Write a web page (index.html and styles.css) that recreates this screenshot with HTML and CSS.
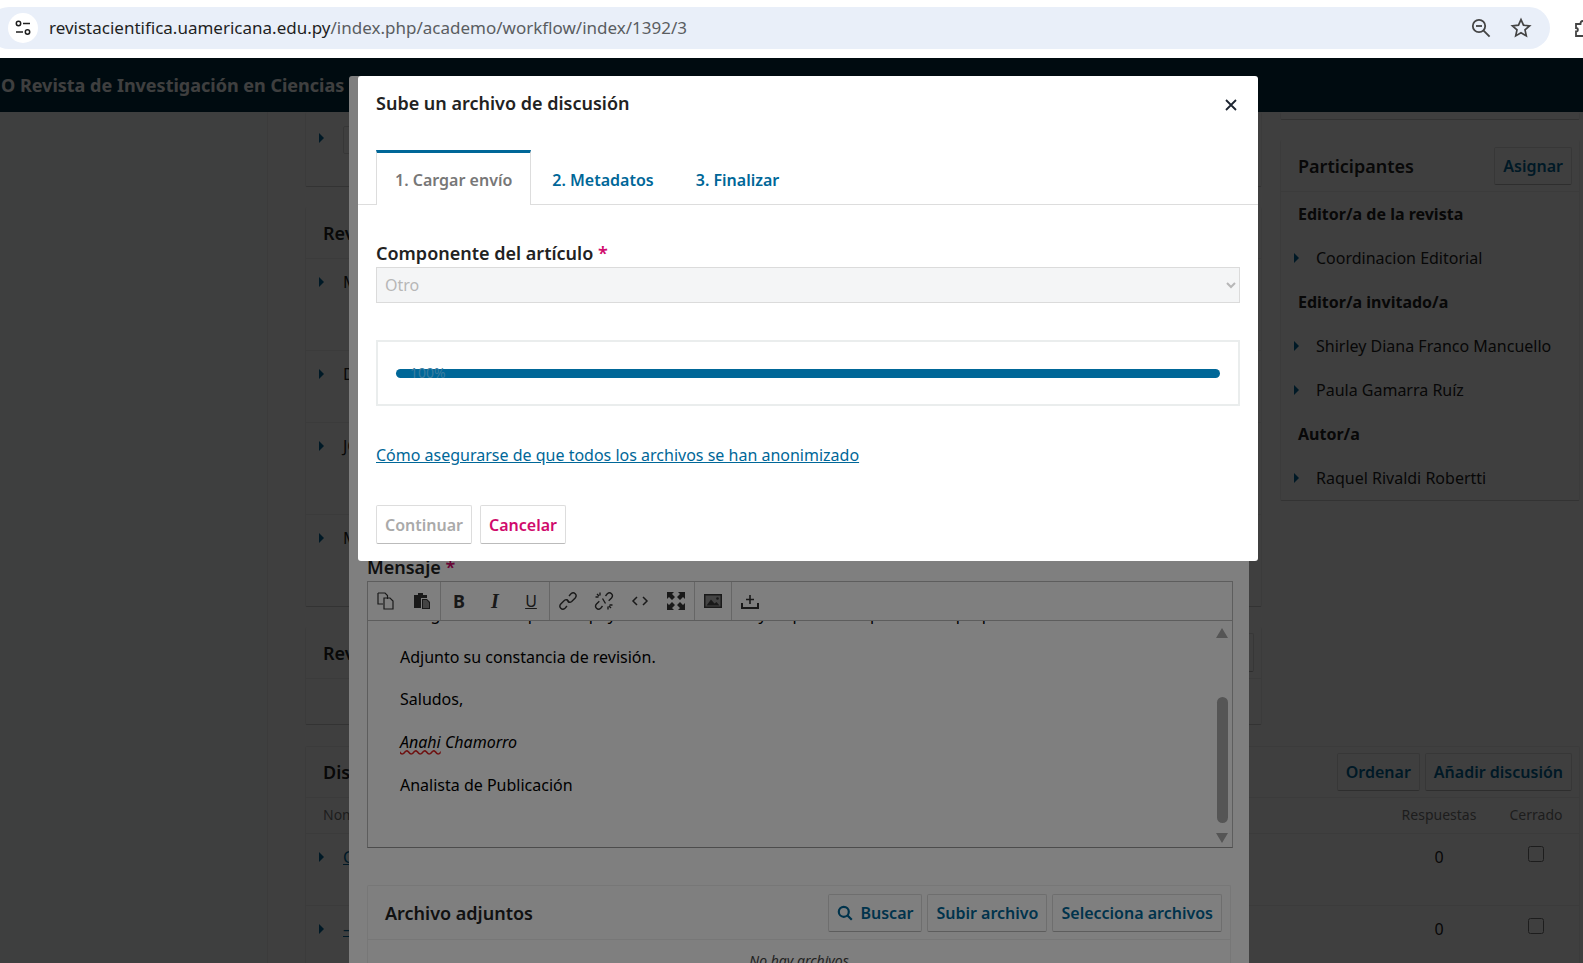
FILE: index.html
```html
<!DOCTYPE html>
<html lang="es">

<head>
  <meta charset="UTF-8" />
  <meta name="viewport" content="width=device-width, initial-scale=1.0" />
  <title>Sube un archivo de discusión</title>
  <link rel="stylesheet" href="styles.css">
</head>

<body>
  <div class="browser-bar">
    <div class="url-pill">
      <span class="site-info">
        <svg width="18" height="18" viewBox="0 0 18 18" fill="none" stroke="#1f1f1f" stroke-width="1.5">
          <circle cx="4.5" cy="4.5" r="2.2" />
          <path d="M9 4.5h7" />
          <path d="M2 13h7" />
          <circle cx="13.5" cy="13" r="2.2" />
        </svg>
      </span>
      <span class="url-text"><b>revistacientifica.uamericana.edu.py</b>/index.php/academo/workflow/index/1392/3</span>
      <span class="url-icons">
        <svg width="22" height="22" viewBox="0 0 22 22" fill="none" stroke="#444" stroke-width="1.8">
          <circle cx="9" cy="9" r="6.2" />
          <path d="M13.6 13.6l6 6" />
          <path d="M6 9h6" />
        </svg>
        <svg width="22" height="22" viewBox="0 0 22 22" fill="none" stroke="#444" stroke-width="1.7">
          <path d="M11 2.6l2.5 5.6 6.1.6-4.6 4.1 1.3 6-5.3-3.1-5.3 3.1 1.3-6-4.6-4.1 6.1-.6z" />
        </svg>
      </span>
    </div>
    <svg class="puzzle" width="22" height="22" viewBox="0 0 22 22" fill="none" stroke="#444" stroke-width="1.8">
      <path d="M3 19v-4.5c2.5 0 2.5-3.5 0-3.5V7h4.5c0-4 4.5-4 4.5 0H16v4c4 0 4 4.500 0 4.500V19z" />
    </svg>
  </div>

  <div class="app">
    <header class="app-nav">O Revista de Investigación en Ciencias Sociales</header>

    <div class="app-body">
      <aside class="side-nav"></aside>

      <main class="workflow">
        <div class="stack">
          <section class="card card-first">
            <div class="row"><i class="tri"></i><span class="file-box"></span></div>
          </section>

          <section class="card">
            <div class="card-head"><h2>Revisores</h2></div>
            <div class="row row-tall"><i class="tri"></i><span>M</span></div>
            <div class="row row-short"><i class="tri"></i><span>D</span></div>
            <div class="row row-tall"><i class="tri"></i><span>JO</span></div>
            <div class="row row-last"><i class="tri"></i><span>M</span></div>
          </section>

          <section class="card">
            <div class="card-head"><h2>Revisión</h2><span class="btn btn-ghost"></span></div>
            <div class="card-empty"></div>
          </section>
        </div>

        <div class="stack">
          <section class="card card-sliver"></section>

          <section class="card">
            <div class="card-head"><h2>Participantes</h2><span class="btn">Asignar</span></div>
            <h3 class="role">Editor/a de la revista</h3>
            <div class="person"><i class="tri"></i>Coordinacion Editorial</div>
            <h3 class="role">Editor/a invitado/a</h3>
            <div class="person"><i class="tri"></i>Shirley Diana Franco Mancuello</div>
            <div class="person"><i class="tri"></i>Paula Gamarra Ruíz</div>
            <h3 class="role">Autor/a</h3>
            <div class="person"><i class="tri"></i>Raquel Rivaldi Robertti</div>
          </section>
        </div>

        <section class="card discussions">
          <div class="card-head">
            <h2>Discusión</h2>
            <div class="btn-group">
              <span class="btn">Ordenar</span>
              <span class="btn">Añadir discusión</span>
            </div>
          </div>
          <div class="disc-row disc-header">
            <span class="disc-name">Nombre</span>
            <span>Última respuesta</span>
            <span class="center">Respuestas</span>
            <span class="center">Cerrado</span>
          </div>
          <div class="disc-row">
            <span class="disc-name"><i class="tri"></i><a>C</a></span>
            <span></span>
            <span class="center">0</span>
            <span class="center"><input type="checkbox" class="check" /></span>
          </div>
          <div class="disc-row">
            <span class="disc-name"><i class="tri"></i><a>–</a></span>
            <span></span>
            <span class="center">0</span>
            <span class="center"><input type="checkbox" class="check" /></span>
          </div>
        </section>
      </main>
    </div>

    <div class="backdrop"></div>

    <div class="modal modal-back">
      <div class="field-label">Mensaje <em>*</em></div>
      <div class="editor">
        <div class="toolbar">
          <div class="tool-group">
            <span class="tool">
              <svg width="20" height="20" viewBox="0 0 20 20" fill="none" stroke="#333" stroke-width="1.2">
                <path d="M2 2h7l2.500 2.500V8M2 2v11h5" />
                <path d="M8 7h6l3 3v8H8z" />
              </svg>
            </span>
            <span class="tool">
              <svg width="20" height="20" viewBox="0 0 20 20">
                <path d="M2 4h4V2h5v2h4v3H9v10H2z" fill="#333" />
                <path d="M10 8h5l3 3v7h-8z" fill="#333" />
                <path d="M11 9h3.500l2.500 2.500V17h-6z" fill="#888" />
              </svg>
            </span>
          </div>
          <div class="tool-group">
            <span class="tool tool-b">B</span>
            <span class="tool tool-i">I</span>
            <span class="tool tool-u">U</span>
          </div>
          <div class="tool-group">
            <span class="tool">
              <svg width="20" height="20" viewBox="0 0 20 20" fill="none" stroke="#333" stroke-width="1.400">
                <path d="M8.500 8.500l3 3" />
                <path d="M11 5l2-2.200c1.500-1.300 3.200-1 4.200 0s1.300 2.700 0 4.200l-3.500 3.500c-1.500 1.300-3 1-4-.2" />
                <path d="M9 15l-2 2.200c-1.500 1.300-3.200 1-4.200 0s-1.300-2.700 0-4.200l3.500-3.500c1.500-1.300 3-1 4 .2" />
              </svg>
            </span>
            <span class="tool">
              <svg width="20" height="20" viewBox="0 0 20 20" fill="none" stroke="#333" stroke-width="1.400">
                <path d="M11.500 5l1.800-2.200c1.500-1.300 3.200-1 4.200 0s1.300 2.700 0 4.200l-2.800 2.800" />
                <path d="M8.500 15l-1.800 2.200c-1.500 1.300-3.200 1-4.200 0s-1.300-2.700 0-4.200l2.800-2.800" />
                <path d="M6 1.500v3M1.500 6h3M3 3l2 2M14 18.500v-3M18.500 14h-3M17 17l-2-2M8.500 7.500l3 5" />
              </svg>
            </span>
            <span class="tool">
              <svg width="20" height="20" viewBox="0 0 20 20" fill="none" stroke="#333" stroke-width="1.500">
                <path d="M7 6l-4 4 4 4M13 6l4 4-4 4" />
              </svg>
            </span>
            <span class="tool">
              <svg width="20" height="20" viewBox="0 0 20 20" fill="#333">
                <path d="M1 1h7L6 3l3 3-3 3-3-3-2 2zM19 1v7l-2-2-3 3-3-3 3-3-2-2zM1 19v-7l2 2 3-3 3 3-3 3 2 2zM19 19h-7l2-2-3-3 3-3 3 3 2-2z" />
              </svg>
            </span>
          </div>
          <div class="tool-group">
            <span class="tool">
              <svg width="20" height="20" viewBox="0 0 20 20">
                <path d="M1 3h18v14H1z" fill="#333" />
                <path d="M2.500 4.500h15v11h-15z" fill="#888" />
                <path d="M3.500 14.500l4.500-6 3.500 4 2-1.500 3 3.500z" fill="#333" />
                <circle cx="14.500" cy="7.500" r="1.300" fill="#333" />
              </svg>
            </span>
          </div>
          <div class="tool-group tool-group-last">
            <span class="tool">
              <svg width="20" height="20" viewBox="0 0 20 20" fill="none" stroke="#333" stroke-width="2">
                <path d="M2 12v5h16v-5" />
                <path d="M10 4v9M6 8.500h8" stroke-width="1.600" />
              </svg>
            </span>
          </div>
        </div>
        <div class="editor-body">
          <p class="clipped">Le agradecemos por su apoyo a nuestra revista y su pronta respuesta a la propuesta.</p>
          <p>Adjunto su constancia de revisión.</p>
          <p>Saludos,</p>
          <p><i><span class="misspelled">Anahi</span> Chamorro</i></p>
          <p>Analista de Publicación</p>
          <div class="scroll-rail">
            <i class="scroll-up"></i>
            <i class="scroll-thumb"></i>
            <i class="scroll-down"></i>
          </div>
        </div>
      </div>

      <section class="attachments">
        <div class="attach-head">
          <h2>Archivo adjuntos</h2>
          <div class="btn-group">
            <span class="btn">
              <svg width="16" height="16" viewBox="0 0 16 16" fill="none" stroke="#006798" stroke-width="2.200">
                <circle cx="6.800" cy="6.800" r="5" />
                <path d="M10.500 10.500l4.300 4.300" />
              </svg>
              Buscar
            </span>
            <span class="btn">Subir archivo</span>
            <span class="btn">Selecciona archivos</span>
          </div>
        </div>
        <div class="attach-empty">No hay archivos</div>
      </section>
    </div>

    <div class="backdrop"></div>

    <div class="modal modal-front">
      <div class="modal-head">
        <h1>Sube un archivo de discusión</h1>
        <svg class="close" width="12" height="12" viewBox="0 0 12 12" fill="none" stroke="#1c2430" stroke-width="1.800">
          <path d="M1 1l10 10M11 1L1 11" />
        </svg>
      </div>

      <div class="tabs">
        <span class="tab active">1. Cargar envío</span>
        <span class="tab">2. Metadatos</span>
        <span class="tab">3. Finalizar</span>
      </div>

      <div class="modal-body">
        <div class="field-label">Componente del artículo <em>*</em></div>
        <select class="select" disabled>
          <option>Otro</option>
        </select>

        <div class="upload-box">
          <div class="progress"><span class="progress-text">100%</span></div>
        </div>

        <a class="help-link">Cómo asegurarse de que todos los archivos se han anonimizado</a>

        <div class="btn-group actions">
          <span class="btn btn-disabled">Continuar</span>
          <span class="btn btn-cancel">Cancelar</span>
        </div>
      </div>
    </div>
  </div>
</body>

</html>
```

FILE: styles.css
```css
* {
  padding: 0;
  margin: 0;
  box-sizing: border-box;
}

html,
body {
  height: 100%;
  overflow: hidden;
}

body {
  display: flex;
  flex-direction: column;
  font-family: "Noto Sans", sans-serif;
  font-size: 16px;
  line-height: 24px;
  color: #222;
  background-color: #fff;
}

/* browser chrome */
.browser-bar {
  flex: none;
  display: flex;
  align-items: center;
  height: 58px;
  padding-bottom: 2px;
  overflow: hidden;
  background-color: #fff;
}

.url-pill {
  flex: none;
  display: flex;
  align-items: center;
  width: 1562px;
  height: 42px;
  margin-left: -12px;
  padding: 0 18px 0 20px;
  border-radius: 21px;
  background-color: #e9eff9;
}

.site-info {
  display: flex;
  align-items: center;
  justify-content: center;
  width: 30px;
  height: 30px;
  border-radius: 50%;
  background-color: #fff;
}

.url-text {
  margin-left: 11px;
  font-size: 17px;
  color: #5a5d61;
}

.url-text b {
  font-weight: 400;
  color: #1f1f1f;
}

.url-icons {
  display: flex;
  gap: 18px;
  margin-left: auto;
}

.puzzle {
  flex: none;
  margin-left: 23px;
}

/* page behind the dialogs */
.app {
  position: relative;
  flex: 1;
  overflow: hidden;
}

.app-nav {
  height: 54px;
  padding-left: 1px;
  font-size: 18px;
  font-weight: 700;
  line-height: 54px;
  white-space: nowrap;
  color: #fff;
  background-color: #002c42;
}

.app-body {
  display: flex;
  height: 851px;
  overflow: hidden;
}

.side-nav {
  flex: none;
  width: 268px;
  border-right: 1px solid #eee;
  background-color: #f9fdfc;
}

.workflow {
  flex: 1;
  display: grid;
  grid-template-columns: 957px 300px;
  grid-template-rows: 613px auto;
  gap: 21px 18px;
  padding-left: 37px;
  background-color: #fff;
}

.stack {
  display: flex;
  flex-direction: column;
  gap: 20px;
}

.card {
  border: 1px solid #eee;
  border-top: 0;
  border-bottom-color: #ccc;
  border-radius: 2px;
  background-color: #fff;
}

.card-first {
  height: 75px;
  padding-top: 14px;
}

.card-sliver {
  height: 8px;
}

.card-head {
  display: flex;
  align-items: center;
  justify-content: space-between;
  height: 52px;
  padding: 0 7px 0 17px;
  border-bottom: 1px solid #eee;
}

.card-head h2,
.attach-head h2 {
  font-size: 18px;
  font-weight: 600;
}

.card-empty {
  height: 45px;
}

.row {
  display: flex;
  align-items: flex-start;
  padding: 11px 0 0 13px;
  border-bottom: 1px solid #eee;
}

.row:last-child {
  border-bottom: 0;
}

.card-first .row {
  padding-top: 0;
}

.row-tall {
  height: 92px;
}

.row-short {
  height: 72px;
}

.row-last {
  height: 91px;
}

.tri {
  flex: none;
  display: inline-block;
  width: 0;
  height: 0;
  margin: 7px 19px 0 0;
  border-top: 5px solid transparent;
  border-bottom: 5px solid transparent;
  border-left: 5px solid #006798;
}

.file-box {
  width: 300px;
  height: 28px;
  border: 1px solid #ddd;
  border-radius: 2px;
}

.role {
  height: 44px;
  padding-left: 17px;
  font-size: 16px;
  font-weight: 700;
  line-height: 44px;
}

.person {
  display: flex;
  align-items: center;
  height: 44px;
  padding-left: 13px;
  color: #222;
}

.person .tri {
  margin-top: 0;
  margin-right: 17px;
}

.discussions {
  grid-column: 1 / 3;
  border-top: 1px solid #eee;
}

.discussions .card-head {
  height: 51px;
}

.disc-row {
  display: grid;
  grid-template-columns: 1fr 251px 108px 86px;
  height: 72px;
  padding-top: 11px;
  border-bottom: 1px solid #eee;
}

.disc-header {
  height: 36px;
  padding-top: 5px;
  font-size: 14px;
  color: #777;
}

.disc-name {
  display: flex;
  padding-left: 13px;
}

.disc-header .disc-name {
  padding-left: 17px;
}

.disc-name a {
  color: #006798;
  text-decoration: underline;
}

.center {
  text-align: center;
}

.check {
  display: block;
  width: 16px;
  height: 16px;
  margin: 1px auto 0;
}

/* buttons */
.btn-group {
  display: flex;
  gap: 5px;
}

.btn {
  display: inline-flex;
  align-items: center;
  gap: 7px;
  height: 38px;
  padding: 0 8px;
  border: 1px solid #ddd;
  border-bottom-color: #bbb;
  border-radius: 2px;
  font-size: 16px;
  font-weight: 600;
  white-space: nowrap;
  color: #006798;
  background-color: #fff;
}

.btn-ghost {
  width: 200px;
  height: 39px;
}

/* dialogs */
.backdrop {
  position: absolute;
  inset: 0;
  background-color: rgba(0, 0, 0, 0.5);
}

.modal {
  position: absolute;
  top: 18px;
  width: 900px;
  border-radius: 3px;
  background-color: #fff;
}

.modal-back {
  left: 349px;
  height: 900px;
  padding: 479px 18px 0;
}

.modal-front {
  left: 358px;
}

.modal-head {
  display: flex;
  align-items: flex-start;
  justify-content: space-between;
  height: 74px;
  padding: 14px 21px 0 18px;
}

.modal-head h1 {
  font-size: 18px;
  font-weight: 600;
  line-height: 26px;
}

.close {
  margin-top: 9px;
}

.tabs {
  display: flex;
  height: 55px;
  padding-left: 18px;
  border-bottom: 1px solid #ddd;
}

.tab {
  height: 55px;
  padding: 3px 21px 0 21px;
  border-top: 3px solid transparent;
  font-weight: 600;
  line-height: 48px;
  color: #006798;
}

.tab.active {
  padding: 3px 18px 0;
  border-top-color: #006798;
  border-right: 1px solid #ddd;
  border-left: 1px solid #ddd;
  color: #777;
  background-color: #fff;
}

.modal-body {
  padding: 36px 18px 17px;
}

.field-label {
  margin-bottom: 2px;
  font-size: 18px;
  font-weight: 600;
}

.field-label em {
  font-style: normal;
  color: #d00a6c;
}

.select {
  display: block;
  width: 100%;
  height: 36px;
  padding-left: 4px;
  border: 1px solid #ccc;
  border-radius: 0;
  font-family: inherit;
  font-size: 16px;
  color: #999;
  background-color: #f0f1f3;
}

.upload-box {
  height: 66px;
  margin-top: 37px;
  padding: 27px 18px 0;
  border: 2px solid #eaeded;
}

.progress {
  position: relative;
  height: 9px;
  border-radius: 5px;
  background-color: #006798;
}

.progress-text {
  position: absolute;
  top: -8px;
  left: 14px;
  font-size: 14px;
  color: #3a7da0;
}

.help-link {
  display: block;
  margin-top: 37px;
  color: #006798;
  text-decoration: underline;
}

.actions {
  gap: 8px;
  margin-top: 38px;
}

.actions .btn {
  height: 39px;
}

.btn-disabled {
  color: #aaa;
}

.btn-cancel {
  color: #d00a6c;
}

/* message editor */
.editor {
  margin-right: -2px;
  border: 1px solid #bbb;
  border-bottom-color: #999;
}

.toolbar {
  display: flex;
  height: 39px;
  border-bottom: 1px solid #bbb;
}

.tool-group {
  display: flex;
  align-items: center;
  padding-left: 8px;
  border-right: 1px solid #ccc;
}

.tool-group-last {
  border-right: 0;
}

.tool {
  display: flex;
  align-items: center;
  justify-content: center;
  width: 20px;
  height: 24px;
  margin-right: 16px;
  color: #333;
}

.tool:last-child {
  margin-right: 8px;
}

.tool-b {
  font-size: 18px;
  font-weight: 700;
}

.tool-i {
  font-family: "Liberation Serif", serif;
  font-size: 20px;
  font-weight: 700;
  font-style: italic;
}

.tool-u {
  font-size: 16px;
  text-decoration: underline;
}

.editor-body {
  position: relative;
  height: 226px;
  padding-left: 32px;
  overflow: hidden;
  color: #000;
}

.editor-body p {
  margin-bottom: 18.7px;
}

.editor-body .clipped {
  margin-top: -19px;
  white-space: nowrap;
}

.misspelled {
  text-decoration: underline wavy #d22;
}

.scroll-rail {
  position: absolute;
  top: 0;
  right: 4px;
  bottom: 0;
  width: 12px;
}

.scroll-up,
.scroll-down {
  position: absolute;
  left: 0;
  width: 0;
  height: 0;
  border-right: 6px solid transparent;
  border-left: 6px solid transparent;
}

.scroll-up {
  top: 7px;
  border-bottom: 10px solid #aaa;
}

.scroll-down {
  bottom: 4px;
  border-top: 10px solid #aaa;
}

.scroll-thumb {
  position: absolute;
  top: 76px;
  left: 1px;
  width: 11px;
  height: 126px;
  border-radius: 6px;
  background-color: #aaa;
}

/* attachments */
.attachments {
  margin-top: 37px;
  border: 1px solid #eee;
  border-bottom-color: #ccc;
  border-radius: 2px;
}

.attach-head {
  display: flex;
  align-items: center;
  justify-content: space-between;
  height: 54px;
  padding: 0 8px 0 17px;
  border-bottom: 1px solid #eee;
}

.attach-empty {
  padding-top: 9px;
  font-size: 14px;
  font-style: italic;
  text-align: center;
  color: #444;
}
```
